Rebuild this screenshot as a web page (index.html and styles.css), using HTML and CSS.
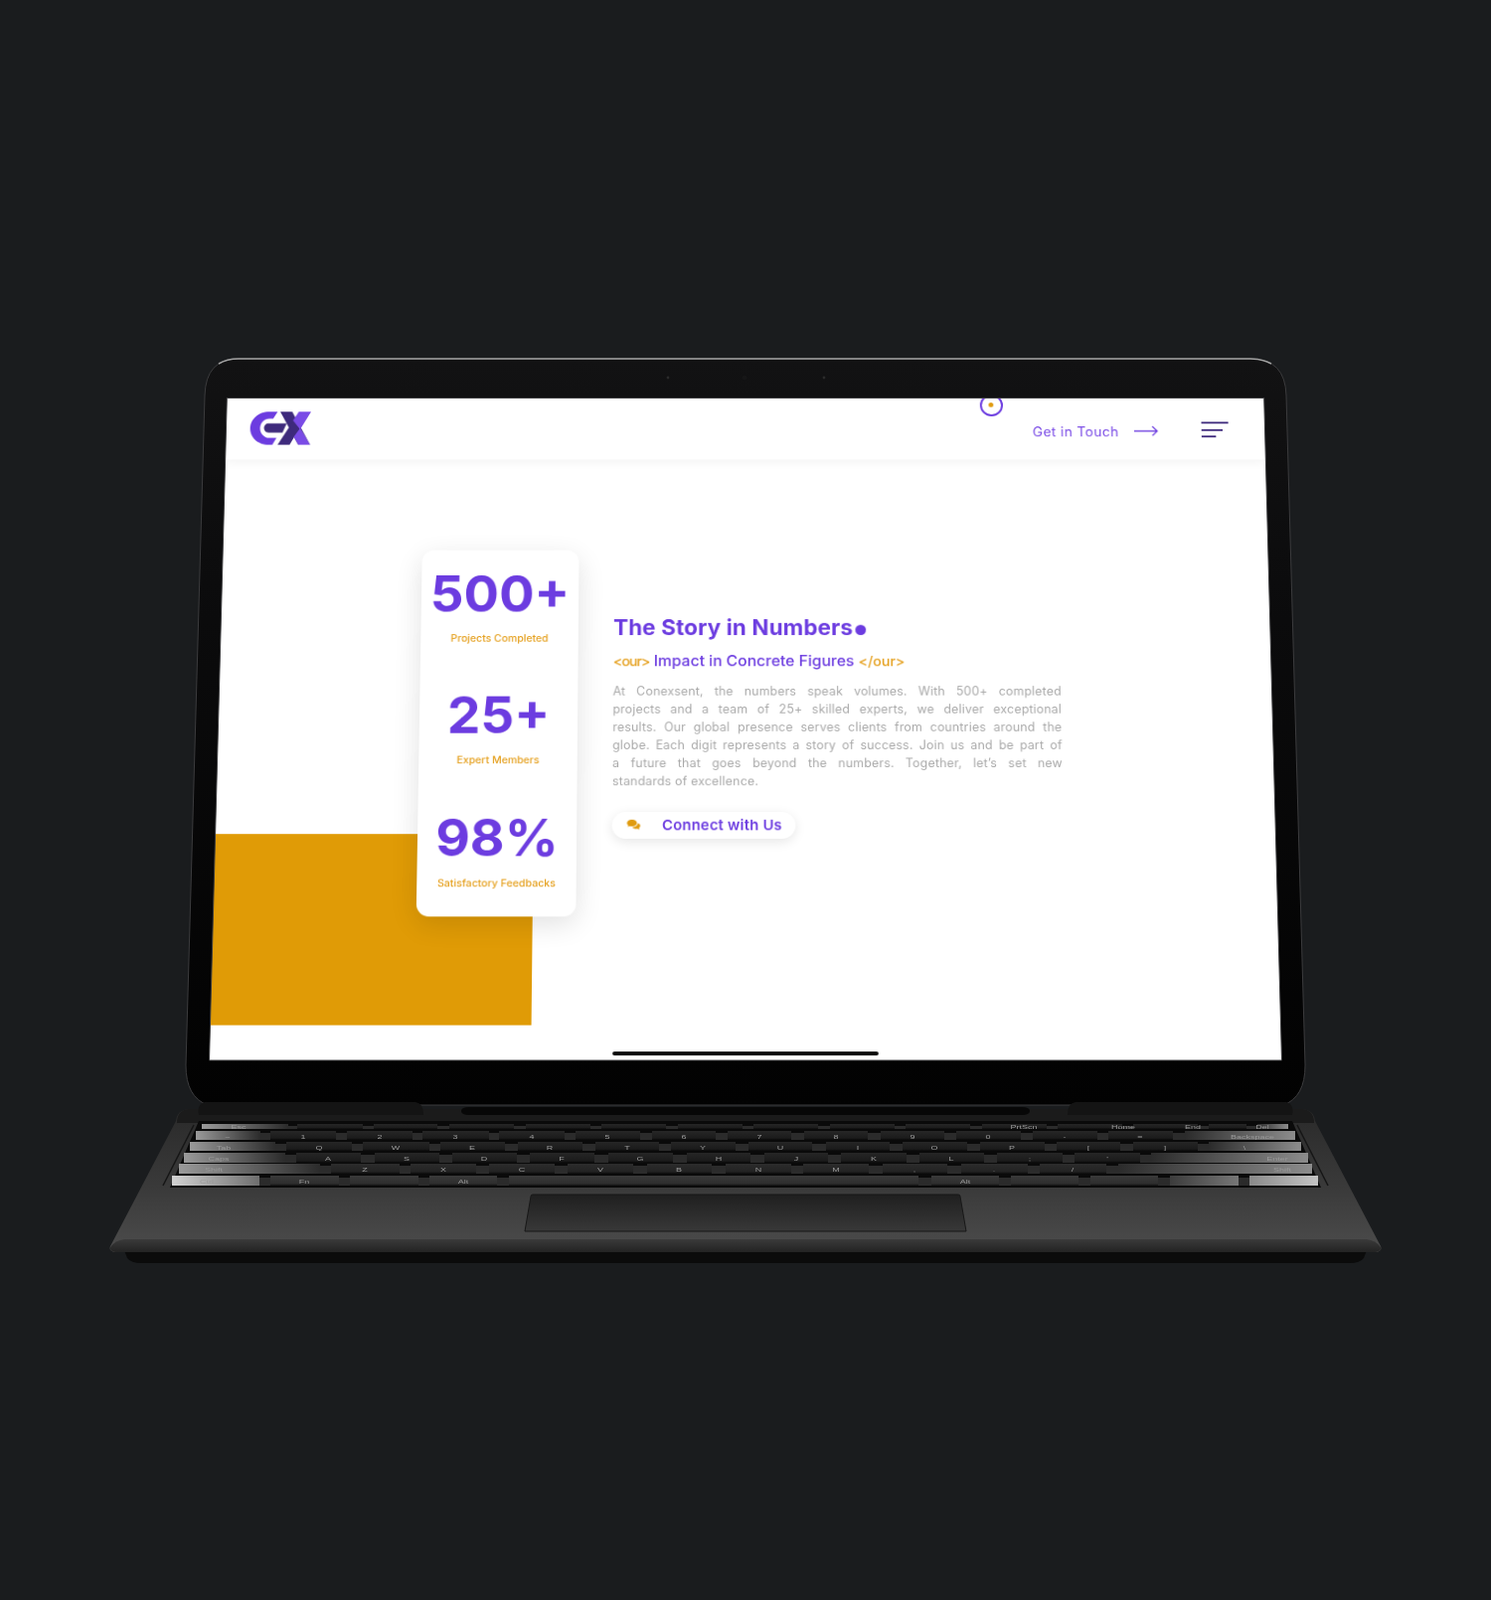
FILE: index.html
```html
<!DOCTYPE html>
<html lang="en">

<head>
    <meta charset="UTF-8">
    <meta name="viewport" content="width=device-width, initial-scale=1.0">
    <title>Conexsent - The Story in Numbers</title>
    <link rel="stylesheet" href="styles.css">
</head>

<body>
    <div class="stage">
        <!-- the page shown on the tablet, mapped to the screen's trapezoid -->
        <div class="screen">
            <div class="page">
                <header class="topbar">
                    <svg class="logo" viewBox="0 0 183 105">
                        <path fill="#6c3ce0" d="M82 0L69 22H58C42 22 30 35 30 52C30 69 42 83 58 83H80L68 105H58C24 105 0 82 0 52C0 23 24 0 58 0Z" />
                        <path fill="#3e2a7c" d="M56 37H110L98 66H56C47 66 42 59 42 52C42 44 47 37 56 37Z" />
                        <path fill="#3e2a7c" d="M90 0H126L182 105H146Z" />
                        <path fill="#3e2a7c" d="M84 105H120L156 40L140 12Z" />
                        <path fill="#7a4be6" d="M146 0H183L151 56L129 28Z" />
                        <path fill="#7a4be6" d="M151 52L182 105H147L132 80Z" />
                    </svg>
                    <span class="ring"></span>
                    <a class="touch">Get in Touch</a>
                    <svg class="arrow" viewBox="0 0 25 12">
                        <path fill="none" stroke="#6c3ce0" stroke-width="1.3" d="M0 6H24M19 1L24 6L19 11" />
                    </svg>
                    <div class="menu"><i class="m1"></i><i class="m2"></i><i class="m3"></i></div>
                </header>

                <main class="numbers">
                    <div class="orange"></div>
                    <div class="card">
                        <div class="stat">
                            <div class="stat-num">500+</div>
                            <div class="stat-label">Projects Completed</div>
                        </div>
                        <div class="stat">
                            <div class="stat-num">25+</div>
                            <div class="stat-label">Expert Members</div>
                        </div>
                        <div class="stat">
                            <div class="stat-num">98%</div>
                            <div class="stat-label">Satisfactory Feedbacks</div>
                        </div>
                    </div>
                    <section class="story">
                        <h2>The Story in Numbers<span class="dot"></span></h2>
                        <h3><span class="tag tag-open">&lt;our&gt;</span> Impact in Concrete Figures <span class="tag">&lt;/our&gt;</span></h3>
                        <p>
                            <span class="line">At Conexsent, the numbers speak volumes. With 500+ completed</span>
                            <span class="line">projects and a team of 25+ skilled experts, we deliver exceptional</span>
                            <span class="line">results. Our global presence serves clients from countries around the</span>
                            <span class="line">globe. Each digit represents a story of success. Join us and be part of</span>
                            <span class="line">a future that goes beyond the numbers. Together, let’s set new</span>
                            <span class="line line-end">standards of excellence.</span>
                        </p>
                        <a class="connect">
                            <svg class="chat" viewBox="0 0 16 13">
                                <path fill="#e09b0f" d="M6 0C2.7 0 0 1.8 0 4.2C0 5.4 .7 6.4 1.7 7.2L.8 9L3.4 8C4.2 8.2 5.1 8.4 6 8.4C9.3 8.4 12 6.5 12 4.2C12 1.8 9.3 0 6 0Z" />
                                <path fill="#e09b0f" d="M13 4.3C13 7.3 10 9.2 6.6 9.4C7.5 10.7 9.1 11.4 10.8 11.4C11.4 11.4 12 11.3 12.5 11.2L15.2 12.4L14.4 10.3C15.4 9.6 16 8.7 16 7.6C16 6.2 14.8 5 13 4.3Z" />
                            </svg>
                            <span>Connect with Us</span>
                        </a>
                    </section>
                </main>

                <div class="home-bar"></div>
            </div>
        </div>

        <!-- tablet body and keyboard cover -->
        <svg class="device" width="1500" height="1610" viewBox="0 0 1500 1610">
            <defs>
                <linearGradient id="bezel" x1="0" y1="0" x2="0" y2="1">
                    <stop offset="0" stop-color="#121213" />
                    <stop offset="0.35" stop-color="#0b0b0c" />
                    <stop offset="1" stop-color="#020202" />
                </linearGradient>
                <linearGradient id="deck" x1="0" y1="0" x2="0" y2="1">
                    <stop offset="0" stop-color="#2a2a2a" />
                    <stop offset="0.55" stop-color="#3a3a3a" />
                    <stop offset="1" stop-color="#4c4c4c" />
                </linearGradient>
                <linearGradient id="lip" x1="0" y1="0" x2="0" y2="1">
                    <stop offset="0" stop-color="#3a3a3a" />
                    <stop offset="1" stop-color="#232323" />
                </linearGradient>
                <linearGradient id="pad" x1="0" y1="0" x2="0" y2="1">
                    <stop offset="0" stop-color="#1f1f1f" />
                    <stop offset="1" stop-color="#383838" />
                </linearGradient>
                <linearGradient id="keyTop" x1="0" y1="0" x2="0" y2="1">
                    <stop offset="0" stop-color="#262626" />
                    <stop offset="0.8" stop-color="#1b1b1b" />
                    <stop offset="1" stop-color="#0a0a0a" />
                </linearGradient>
                <linearGradient id="keyMid" x1="0" y1="0" x2="0" y2="1">
                    <stop offset="0" stop-color="#2c2c2c" />
                    <stop offset="0.8" stop-color="#222222" />
                    <stop offset="1" stop-color="#0c0c0c" />
                </linearGradient>
                <linearGradient id="keyLow" x1="0" y1="0" x2="0" y2="1">
                    <stop offset="0" stop-color="#3a3a3a" />
                    <stop offset="0.8" stop-color="#2e2e2e" />
                    <stop offset="1" stop-color="#111111" />
                </linearGradient>
                <linearGradient id="shineLeft" x1="0" y1="0" x2="1" y2="0">
                    <stop offset="0" stop-color="#9a9a9a" />
                    <stop offset="1" stop-color="#2b2b2b" />
                </linearGradient>
                <linearGradient id="shineCtrl" x1="0" y1="0" x2="1" y2="0">
                    <stop offset="0" stop-color="#d2d2d2" />
                    <stop offset="1" stop-color="#6e6e6e" />
                </linearGradient>
                <linearGradient id="shineRight" x1="0" y1="0" x2="1" y2="0">
                    <stop offset="0" stop-color="#2b2b2b" />
                    <stop offset="1" stop-color="#8c8c8c" />
                </linearGradient>
                <linearGradient id="shineArrow" x1="0" y1="0" x2="1" y2="0">
                    <stop offset="0" stop-color="#3c3c3c" />
                    <stop offset="1" stop-color="#777777" />
                </linearGradient>
                <linearGradient id="shineEnd" x1="0" y1="0" x2="1" y2="0">
                    <stop offset="0" stop-color="#8a8a8a" />
                    <stop offset="1" stop-color="#c4c4c4" />
                </linearGradient>
            </defs>

            <!-- base -->
            <path fill="#0b0b0b" d="M125 1258H1375L1372 1266Q1368 1271 1358 1271H142Q132 1271 128 1266Z" />
            <path fill="url(#deck)" d="M190 1116H1310Q1322 1117 1323 1128L1389 1254Q1391 1259 1384 1260H116Q109 1259 111 1254L177 1128Q178 1117 190 1116Z" />
            <path fill="url(#lip)" d="M125 1247H1375Q1384 1248 1389 1255Q1390 1259 1384 1260H116Q110 1259 111 1255Q116 1248 125 1247Z" />
            <path fill="#1b1b1b" d="M190 1116H1310Q1322 1117 1322 1130H178Q178 1117 190 1116Z" />
            <path fill="#0a0a0a" d="M200 1128H1300L1329 1195H171Z" />
            <path fill="none" stroke="#161616" stroke-width="1.5" d="M195 1132L164 1193M1305 1132L1336 1193" />
            <path fill="url(#pad)" stroke="#171717" d="M536 1202H964Q966 1202 966 1204L972 1239H528L534 1204Q534 1202 536 1202Z" />

            <!-- posts showing between the keys -->
            <path fill="#2b2b2b" d="M203 1133H1296V1136H203ZM197 1140H1303V1147H197ZM191 1151H1309V1158H191ZM185 1162H1316V1170H185ZM180 1173H1320V1181H180ZM173 1185H1326V1193H173Z" />

            <!-- keys -->
            <path fill="url(#keyTop)" d="M299 1131H365V1136H299ZM376 1131H440V1136H376ZM452 1131H517V1136H452ZM529 1131H594V1136H529ZM605 1131H670V1136H605ZM682 1131H747V1136H682ZM758 1131H823V1136H758ZM835 1131H900V1136H835ZM911 1131H976V1136H911ZM988 1131H1053V1136H988ZM1064 1131H1129V1136H1064ZM1140 1131H1205V1136H1140ZM1216 1131H1254V1136H1216Z" />
            <path fill="url(#keyTop)" d="M272 1138H338V1147H272ZM349 1138H415V1147H349ZM425 1138H492V1147H425ZM502 1138H568V1147H502ZM579 1138H644V1147H579ZM656 1138H720V1147H656ZM732 1138H796V1147H732ZM809 1138H873V1147H809ZM886 1138H950V1147H886ZM962 1138H1027V1147H962ZM1039 1138H1104V1147H1039ZM1115 1138H1180V1147H1115Z" />
            <path fill="url(#keyTop)" d="M288 1149H354V1158H288ZM365 1149H432V1158H365ZM443 1149H508V1158H443ZM521 1149H586V1158H521ZM599 1149H663V1158H599ZM675 1149H740V1158H675ZM753 1149H817V1158H753ZM831 1149H895V1158H831ZM908 1149H973V1158H908ZM986 1149H1051V1158H986ZM1063 1149H1127V1158H1063ZM1140 1149H1205V1158H1140Z" />
            <path fill="url(#keyTop)" d="M298 1160H363V1170H298ZM377 1160H442V1170H377ZM455 1160H520V1170H455ZM533 1160H598V1170H533ZM612 1160H677V1170H612ZM691 1160H755V1170H691ZM769 1160H833V1170H769ZM846 1160H912V1170H846ZM925 1160H990V1170H925ZM1003 1160H1069V1170H1003ZM1081 1160H1147V1170H1081Z" />
            <path fill="url(#keyMid)" d="M333 1171H402V1181H333ZM413 1171H479V1181H413ZM492 1171H558V1181H492ZM571 1171H637V1181H571ZM651 1171H716V1181H651ZM730 1171H796V1181H730ZM808 1171H874V1181H808ZM888 1171H953V1181H888ZM967 1171H1034V1181H967ZM1046 1171H1113V1181H1046Z" />
            <path fill="url(#keyLow)" d="M272 1183H341V1193H272ZM352 1183H421V1193H352ZM432 1183H500V1193H432ZM512 1183H924V1193H512ZM937 1183H1005V1193H937ZM1017 1183H1085V1193H1017ZM1097 1183H1165V1193H1097Z" />

            <rect x="203" y="1131" width="87" height="5" fill="url(#shineLeft)" />
            <rect x="197" y="1138" width="65" height="9" fill="url(#shineLeft)" />
            <rect x="191" y="1149" width="86" height="9" fill="url(#shineLeft)" />
            <rect x="185" y="1160" width="102" height="10" fill="url(#shineLeft)" />
            <rect x="180" y="1171" width="142" height="10" fill="url(#shineLeft)" />
            <rect x="173" y="1183" width="88" height="10" fill="url(#shineCtrl)" />
            <rect x="1265" y="1131" width="31" height="5" fill="url(#shineRight)" />
            <rect x="1192" y="1138" width="111" height="9" fill="url(#shineRight)" />
            <rect x="1216" y="1149" width="93" height="9" fill="url(#shineRight)" />
            <rect x="1158" y="1160" width="158" height="10" fill="url(#shineRight)" />
            <rect x="1125" y="1171" width="195" height="10" fill="url(#shineRight)" />
            <rect x="1177" y="1183" width="69" height="10" fill="url(#shineArrow)" />
            <rect x="1257" y="1183" width="69" height="10" fill="url(#shineEnd)" />

            <!-- key legends, squashed by the viewing angle -->
            <g class="legend" transform="translate(0 1135.5) scale(1 .55)">
                <text x="240">Esc</text><text x="1030">PrtScn</text><text x="1130">Home</text><text x="1200">End</text><text x="1270">Del</text>
            </g>
            <g class="legend" transform="translate(0 1145.5) scale(1 .55)">
                <text x="229">~</text><text x="305">1</text><text x="382">2</text><text x="458">3</text><text x="535">4</text><text x="611">5</text><text x="688">6</text><text x="764">7</text><text x="841">8</text><text x="918">9</text><text x="994">0</text><text x="1071">-</text><text x="1147">=</text><text x="1260">Backspace</text>
            </g>
            <g class="legend" transform="translate(0 1156.5) scale(1 .55)">
                <text x="225">Tab</text><text x="321">Q</text><text x="398">W</text><text x="475">E</text><text x="553">R</text><text x="631">T</text><text x="707">Y</text><text x="785">U</text><text x="863">I</text><text x="940">O</text><text x="1018">P</text><text x="1095">[</text><text x="1172">]</text><text x="1252">\</text>
            </g>
            <g class="legend" transform="translate(0 1167.5) scale(1 .55)">
                <text x="220">Caps</text><text x="330">A</text><text x="409">S</text><text x="487">D</text><text x="565">F</text><text x="644">G</text><text x="723">H</text><text x="801">J</text><text x="879">K</text><text x="957">L</text><text x="1036">;</text><text x="1114">'</text><text x="1285">Enter</text>
            </g>
            <g class="legend" transform="translate(0 1178.5) scale(1 .55)">
                <text x="215">Shift</text><text x="367">Z</text><text x="446">X</text><text x="525">C</text><text x="604">V</text><text x="683">B</text><text x="763">N</text><text x="841">M</text><text x="920">,</text><text x="1000">.</text><text x="1079">/</text><text x="1290">Shift</text>
            </g>
            <g class="legend" transform="translate(0 1190.5) scale(1 .55)">
                <text x="208">Ctrl</text><text x="306">Fn</text><text x="466">Alt</text><text x="971">Alt</text>
            </g>

            <!-- tablet, with a hole for the screen -->
            <path fill="url(#bezel)" fill-rule="evenodd" stroke="#3c3c3e" d="M240 361H1258Q1293 361 1294 398L1313 1072Q1313 1104 1291 1112H209Q187 1104 187 1072L206 398Q207 361 240 361ZM228.3 400.5L210.5 1067H1289.5L1271.7 400.5Z" />
            <path fill="none" stroke="#a2a2a2" stroke-width="1.5" d="M220 366Q228 361 240 361H1258Q1270 361 1279 366" />
            <circle cx="672" cy="380" r="1.4" fill="#2b2b2b" />
            <circle cx="749" cy="380" r="2.5" fill="#161617" />
            <circle cx="829" cy="380" r="1.4" fill="#2b2b2b" />

            <!-- hinge -->
            <path fill="#141414" d="M206 1109H418Q426 1110 426 1122H200Q198 1111 206 1109Z" />
            <path fill="#141414" d="M1082 1109H1294Q1302 1111 1300 1122H1074Q1074 1110 1082 1109Z" />
            <path fill="#070707" d="M472 1114H1028Q1036 1114 1036 1118Q1036 1122 1028 1122H472Q464 1122 464 1118Q464 1114 472 1114Z" />
        </svg>
    </div>
</body>

</html>
```

FILE: styles.css
```css
/* General */
body {
    margin: 0;
    background-color: #1a1c1e;
    font-family: Inter, "Liberation Sans", sans-serif;
}

.stage {
    position: relative;
    width: 1500px;
    height: 1610px;
    overflow: hidden;
}

.device {
    position: absolute;
    left: 0;
    top: 0;
}

.legend text {
    font-family: "Liberation Sans", sans-serif;
    font-size: 9px;
    fill: #9a9a9a;
    text-anchor: middle;
}

/* Screen: 1080x700 page squeezed into the tablet's trapezoid.
   It runs a little past the bezel hole so the bezel gives the clean edge */
.screen {
    position: absolute;
    left: 0;
    top: 0;
    box-sizing: border-box;
    width: 1092px;
    height: 708px;
    padding: 4px 6px;
    background-color: #fff;
    overflow: hidden;
    transform-origin: 0 0;
    transform: matrix3d(0.96611, 0, 0, 0, -0.03535, 0.90186, 0, -0.00004713, 0, 0, 1, 0, 228.3, 400.5, 0, 1) translate(-6px, -4px);
}

.page {
    position: relative;
    width: 1080px;
    height: 700px;
    filter: blur(0.3px);
}

/* Top bar */
.topbar {
    position: relative;
    z-index: 2;
    display: flex;
    align-items: center;
    height: 67px;
    padding: 0 38px 0 25px;
    background-color: #fff;
    box-shadow: 0 3px 10px rgba(0, 0, 0, 0.05);
}

.logo {
    width: 63px;
    height: 38px;
    margin: 0 auto 2px 0;
}

.ring {
    position: absolute;
    left: 784px;
    top: -4px;
    width: 20px;
    height: 20px;
    border: 2px solid #6c3ce0;
    border-radius: 50%;
}

.ring::after {
    content: "";
    position: absolute;
    left: 7px;
    top: 7px;
    width: 5px;
    height: 5px;
    border-radius: 50%;
    background-color: #e09b0f;
}

.touch {
    margin-top: 5px;
    color: #7a4be6;
    font-size: 14.2px;
    font-weight: 400;
    letter-spacing: 0.4px;
    white-space: nowrap;
}

.arrow {
    width: 25px;
    height: 12px;
    margin: 5px 45px 0 16px;
}

.menu {
    display: flex;
    flex-direction: column;
    gap: 5.5px;
    width: 28px;
    margin-top: 2px;
}

.menu i {
    display: block;
    height: 2px;
    background-color: #3e2a7c;
}

.menu .m2 {
    width: 22px;
}

.menu .m3 {
    width: 15px;
}

/* Numbers section */
.numbers {
    position: relative;
    display: flex;
    gap: 36px;
    padding: 98px 0 0 206px;
}

.orange {
    position: absolute;
    left: -6px;
    top: 399px;
    width: 330px;
    height: 198px;
    background-color: #e09b06;
}

.card {
    position: relative;
    display: flex;
    flex-direction: column;
    gap: 47px;
    box-sizing: border-box;
    width: 162px;
    height: 387px;
    padding-top: 20px;
    background-color: #fff;
    border-radius: 13px;
    box-shadow: 0 8px 28px rgba(0, 0, 0, 0.12);
    text-align: center;
}

.stat-num {
    color: #6c3ce0;
    font-size: 54px;
    font-weight: 700;
    line-height: 53px;
    white-space: nowrap;
}

.stat-label {
    margin-top: 15px;
    color: #e5a01e;
    font-size: 10.7px;
    font-weight: 500;
    line-height: 14px;
    white-space: nowrap;
}

/* Story text */
.story {
    width: 460px;
    padding-top: 69px;
}

.story h2 {
    margin: 0;
    color: #6c3ce0;
    font-size: 23px;
    font-weight: 700;
    letter-spacing: 0.1px;
    line-height: 28px;
    white-space: nowrap;
}

.dot {
    display: inline-block;
    width: 11px;
    height: 11px;
    margin-left: 2px;
    border-radius: 50%;
    background-color: #6c3ce0;
}

.story h3 {
    margin: 11px 0 0;
    color: #6c3ce0;
    font-size: 16px;
    font-weight: 500;
    line-height: 20px;
    white-space: nowrap;
}

.tag {
    color: #e5a01e;
    font-size: 14.5px;
}

.tag-open {
    letter-spacing: -1px;
}

.story p {
    margin: 11.5px 0 0;
    color: #a9a9a9;
    font-size: 12.5px;
    letter-spacing: 0.2px;
    line-height: 19px;
}

.line {
    display: block;
    white-space: nowrap;
    text-align: justify;
    text-align-last: justify;
}

.line-end {
    text-align-last: left;
}

.connect {
    display: flex;
    align-items: center;
    box-sizing: border-box;
    width: 187px;
    height: 28px;
    margin-top: 23.2px;
    padding-left: 15px;
    background-color: #fff;
    border-radius: 14px;
    box-shadow: 0 3px 12px rgba(0, 0, 0, 0.1);
    color: #6c3ce0;
    font-size: 15px;
    font-weight: 600;
    letter-spacing: 0.2px;
    white-space: nowrap;
}

.chat {
    width: 14px;
    height: 11px;
    margin-right: 22px;
}

.home-bar {
    position: absolute;
    left: 406px;
    top: 691px;
    width: 268px;
    height: 4px;
    border-radius: 2px;
    background-color: #0a0a0a;
}
```
